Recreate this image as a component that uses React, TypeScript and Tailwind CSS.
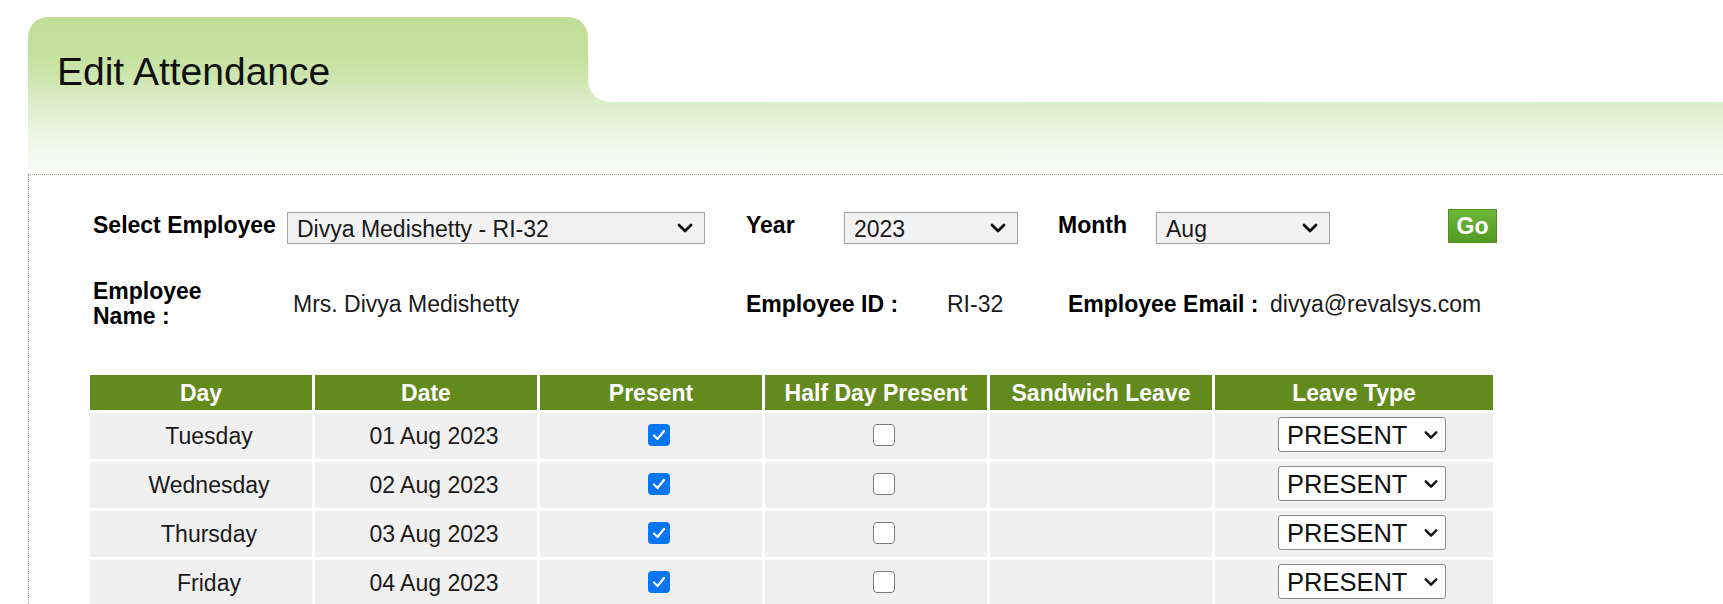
import React from "react";

function Chevron({ className = "" }: { className?: string }) {
  return (
    <svg className={className} width="16" height="10" viewBox="0 0 16 10" fill="none">
      <path d="M2 2 L8 8 L14 2" stroke="#111" strokeWidth="2.8" strokeLinecap="round" strokeLinejoin="round" />
    </svg>
  );
}

function FakeSelect({ value, width }: { value: string; width: string }) {
  return (
    <div
      className={`${width} mt-[4px] h-[32px] flex items-center justify-between border border-[#a3a3a3] bg-[#f2f2f2] pl-[9px] pr-[11px] text-[23px] leading-[26px] text-[#1a1a1a]`}
    >
      <span className="mt-[1px]">{value}</span>
      <Chevron />
    </div>
  );
}

function Checkbox({ checked }: { checked: boolean }) {
  if (checked) {
    return (
      <div className="-mt-[3px] w-[22px] h-[22px] rounded-[4px] bg-[#0a75f0] flex items-center justify-center">
        <svg width="14" height="12" viewBox="0 0 14 12" fill="none">
          <path d="M2 6.5 L5.5 10 L12 2" stroke="#fff" strokeWidth="2.2" strokeLinecap="round" strokeLinejoin="round" />
        </svg>
      </div>
    );
  }
  return <div className="-mt-[3px] w-[22px] h-[22px] rounded-[4px] border-[1.5px] border-[#7a7a7a] bg-white" />;
}

const rows = [
  { day: "Tuesday", date: "01 Aug 2023" },
  { day: "Wednesday", date: "02 Aug 2023" },
  { day: "Thursday", date: "03 Aug 2023" },
  { day: "Friday", date: "04 Aug 2023" },
];

const headers = ["Day", "Date", "Present", "Half Day Present", "Sandwich Leave", "Leave Type"];

export default function App() {
  const grad =
    "bg-[linear-gradient(180deg,#c0de97_0%,#c5e19f_25%,#cfe6b1_40%,#dcedc8_54%,#eef7e6_78%,#fafcf7_97%,#fcfdfa_100%)]";
  return (
    <div className="w-[1723px] h-[604px] overflow-hidden bg-white font-['Liberation_Sans',Arial,sans-serif] text-black">
      <div className="pt-[17px] pl-[28px]">
        {/* Header tab */}
        <div className="flex h-[157px]">
          <div className={`w-[560px] rounded-t-[20px] ${grad} pl-[29px] pt-[35px]`}>
            <h1 className="text-[39px] leading-[39px] text-[#111] font-normal">Edit Attendance</h1>
          </div>
          <div className={`flex-1 ${grad}`}>
            <div className="h-[85px] bg-white rounded-bl-[22px]" />
          </div>
        </div>

        {/* Content */}
        <div className="border-t border-l border-dotted border-[#9a9a9a] pt-[33px] pl-[64px]">
          {/* Row 1 */}
          <div className="flex items-start text-[23px] leading-[26px]">
            <div className="w-[194px] mt-[4px] font-bold">Select Employee</div>
            <FakeSelect value="Divya Medishetty - RI-32" width="w-[418px]" />
            <div className="ml-[41px] w-[98px] mt-[4px] font-bold">Year</div>
            <FakeSelect value="2023" width="w-[174px]" />
            <div className="ml-[40px] w-[98px] mt-[4px] font-bold">Month</div>
            <FakeSelect value="Aug" width="w-[174px]" />
            <div className="ml-[118px] mt-[1px] w-[49px] h-[34px] flex items-center justify-center border border-[#4e8f22] bg-[linear-gradient(180deg,#6fb63a_0%,#5ea72e_55%,#529a26_100%)] text-white font-bold text-[23px] leading-[26px]">
              Go
            </div>
          </div>

          {/* Row 2 */}
          <div className="mt-[35px] flex items-center text-[23px] leading-[25px]">
            <div className="w-[200px]">
              <div className="w-[150px] font-bold">Employee Name :</div>
            </div>
            <div className="w-[453px] text-[#1a1a1a]">Mrs. Divya Medishetty</div>
            <div className="w-[201px] font-bold whitespace-nowrap">Employee ID :</div>
            <div className="w-[121px] text-[#1a1a1a]">RI-32</div>
            <div className="w-[202px] font-bold whitespace-nowrap">Employee Email :</div>
            <div className="text-[#1a1a1a] whitespace-nowrap">divya@revalsys.com</div>
          </div>

          {/* Table */}
          <div className="mt-[46px] -ml-[3px] grid grid-cols-[222px_222px_222px_222px_222px_278px] gap-[3px] text-[23px]">
            {headers.map((h) => (
              <div
                key={h}
                className="h-[35px] bg-[#638a1c] text-white font-bold flex items-center justify-center whitespace-nowrap leading-[26px]"
              >
                {h}
              </div>
            ))}
            {rows.map((r) => (
              <React.Fragment key={r.date}>
                <div className="h-[46px] bg-[#f0f0f0] flex items-center justify-center pl-[16px] text-[#1a1a1a]">{r.day}</div>
                <div className="h-[46px] bg-[#f0f0f0] flex items-center justify-center pl-[16px] text-[#1a1a1a]">{r.date}</div>
                <div className="h-[46px] bg-[#f0f0f0] flex items-center justify-center pl-[16px]">
                  <Checkbox checked />
                </div>
                <div className="h-[46px] bg-[#f0f0f0] flex items-center justify-center pl-[16px]">
                  <Checkbox checked={false} />
                </div>
                <div className="h-[46px] bg-[#f0f0f0]" />
                <div className="h-[46px] bg-[#f0f0f0] flex items-center justify-center pl-[16px]">
                  <div className="-mt-[3px] w-[168px] h-[35px] rounded-[3px] border border-[#8a8a8a] bg-white flex items-center justify-between pl-[8px] pr-[7px] text-[25.5px] leading-[28px] text-[#111]">
                    <span>PRESENT</span>
                    <Chevron className="w-[14px]" />
                  </div>
                </div>
              </React.Fragment>
            ))}
          </div>
        </div>
      </div>
    </div>
  );
}
